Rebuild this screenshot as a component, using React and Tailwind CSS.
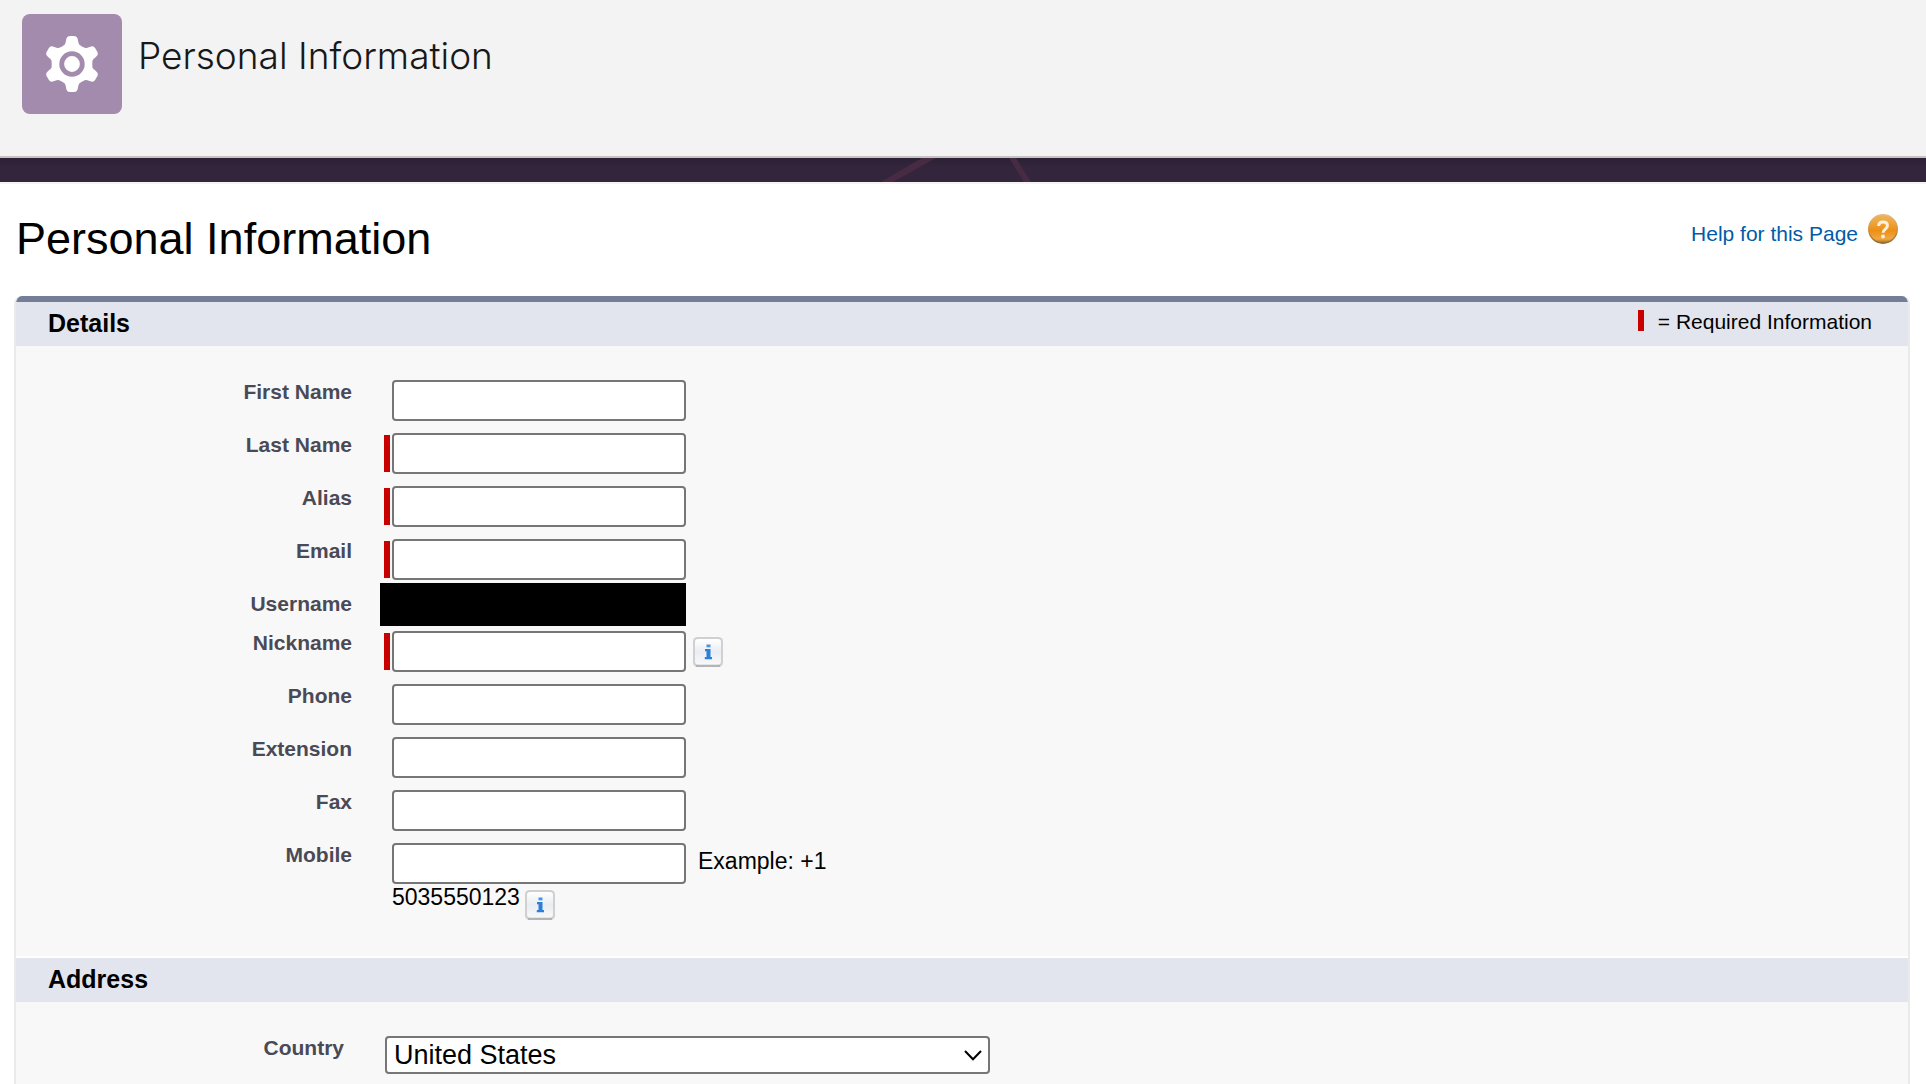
import React from "react";

const toothAngles = [0, 60, 120, 180, 240, 300];

function GearIcon() {
  return (
    <svg viewBox="0 0 100 100" className="size-full" aria-hidden="true">
      <g fill="#fff">
        <circle cx="50" cy="50" r="20.4" />
        {toothAngles.map((a) => (
          <path
            key={a}
            transform={`rotate(${a} 50 50)`}
            d="M41 32 Q43.2 30.8 43.6 28.5 L44.2 25.5 Q44.8 22 48 22 H52 Q55.2 22 55.8 25.5 L56.400 28.5 Q56.8 30.8 59 32 Z"
          />
        ))}
      </g>
      <circle cx="50" cy="50" r="10.3" fill="none" stroke="#a38bae" strokeWidth="4.8" />
    </svg>
  );
}

function HelpIcon() {
  return (
    <svg viewBox="0 0 30 30" className="size-[30px]" aria-hidden="true">
      <defs>
        <linearGradient id="helpFill" x1="0" y1="0" x2="0" y2="1">
          <stop offset="0" stopColor="#e8b462" />
          <stop offset="0.25" stopColor="#efa63e" />
          <stop offset="0.55" stopColor="#ec8f17" />
          <stop offset="0.85" stopColor="#f0a840" />
          <stop offset="1" stopColor="#9c6a24" />
        </linearGradient>
        <linearGradient id="helpRim" x1="0" y1="0" x2="0" y2="1">
          <stop offset="0" stopColor="#e6bd7c" />
          <stop offset="0.6" stopColor="#cf8a2c" />
          <stop offset="1" stopColor="#8f6a38" />
        </linearGradient>
      </defs>
      <circle cx="15" cy="15" r="14.3" fill="url(#helpFill)" stroke="url(#helpRim)" strokeWidth="1.4" />
      <path
        d="M10.600 12c.2-2.600 1.900-3.900 4.400-3.900 2.600 0 4.400 1.400 4.400 3.600 0 3.300-4.300 3.500-4.300 7"
        fill="none"
        stroke="#fdf1da"
        strokeWidth="3"
      />
      <circle cx="15" cy="22.500" r="1.900" fill="#fdf1da" />
    </svg>
  );
}

function InfoButton({ label }) {
  return (
    <button type="button" aria-label={label} className="block size-[30px] shrink-0">
      <svg viewBox="0 0 30 30" className="size-full" aria-hidden="true">
        <defs>
          <linearGradient id="infoFill" x1="0" y1="0" x2="0" y2="1">
            <stop offset="0" stopColor="#fff" />
            <stop offset="0.5" stopColor="#e9edf2" />
            <stop offset="1" stopColor="#f8f8f8" />
          </linearGradient>
        </defs>
        <rect width="30" height="30" rx="4.500" fill="#d0d0d0" />
        <path d="M3 29H27" stroke="#b4b4b4" strokeWidth="2" />
        <rect x="2" y="2" width="26" height="25.500" rx="3" fill="url(#infoFill)" />
        <path d="M12 12h5.500v8h1.500v2.300H11.800v-2.300H13.500v-5.700H12z" fill="#2b7fd6" />
        <rect x="13.500" y="7.500" width="4" height="2.800" fill="#4a94e0" />
      </svg>
    </button>
  );
}

function Row({ id, label, children }) {
  return (
    <div className="flex items-start">
      <label htmlFor={id} className="w-[336px] shrink-0 text-right text-[21px] leading-6 font-bold text-[#4a4a56]">
        {label}
      </label>
      {children}
    </div>
  );
}

function Field({ id, label, required, children }) {
  return (
    <Row id={id} label={label}>
      <div className="mb-3 ml-8 flex items-start">
        <span className={required ? "mt-[2px] mr-[2px] h-[37px] w-[6px] bg-[#c80000]" : "mr-[2px] h-[37px] w-[6px]"} />
        <input
          id={id}
          type="text"
          required={required}
          className="h-[41px] w-[294px] rounded-[4px] border-2 border-[#767676] bg-white px-2 text-[23px] shadow-none outline-none"
        />
        {children}
      </div>
    </Row>
  );
}

function SectionBand({ title, children }) {
  return (
    <div className="flex h-11 items-start justify-between bg-[#e3e5ee] pr-9 pl-8">
      <h2 className="pt-[7px] text-[25px] leading-7 font-bold">{title}</h2>
      {children}
    </div>
  );
}

export default function App() {
  return (
    <div className="flex min-h-screen flex-col bg-white font-['Liberation_Sans',Arial,sans-serif] text-black">
      <header className="flex h-[158px] items-start gap-4 border-b-2 border-[#c4c4c4] bg-[#f3f3f3] pt-[14px] pl-[22px]">
        <div className="size-[100px] rounded-lg bg-[#a38bae]">
          <GearIcon />
        </div>
        <div className="pt-[18px] font-['Inter',sans-serif] text-[37px] leading-[48px] font-light text-[#181818]">
          Personal Information
        </div>
      </header>
      <div className="flex h-[26px] justify-center border-b-2 border-[#f3f3f3] bg-linear-to-b from-[#2d2136] from-0% to-[#33253c] to-40%">
        <svg viewBox="0 0 160 24" className="h-6 w-40" aria-hidden="true">
          <path d="M-2 24L39 0H53L10 24Z" fill="#472b42" />
          <path d="M126 0H133L148 24H141Z" fill="#472b42" />
        </svg>
      </div>

      <main className="flex grow flex-col pr-4 pl-[14px]">
        <div className="flex h-28 items-start justify-between pr-3 pl-[2px]">
          <h1 className="pt-[29px] text-[45px] leading-[52px]">Personal Information</h1>
          <a href="#help" className="flex items-start gap-[10px] pt-[30px] text-[21px] leading-6 text-[#015ba7]">
            <span className="pt-2">Help for this Page</span>
            <HelpIcon />
          </a>
        </div>

        <form className="flex grow flex-col overflow-hidden rounded-t-lg border-x-2 border-[#eaeaea] bg-[#f8f8f8]">
          <div className="-mx-[2px] h-[6px] bg-[#747e96]" />
          <SectionBand title="Details">
            <div className="flex items-start gap-[14px] pt-2 text-[21px] leading-6">
              <span className="h-[21px] w-[6px] bg-[#c80000]" />
              <span>= Required Information</span>
            </div>
          </SectionBand>

          <div className="pt-[34px] pb-9">
            <Field id="firstName" label="First Name" />
            <Field id="lastName" label="Last Name" required />
            <Field id="alias" label="Alias" required />
            <Field id="email" label="Email" required />
            <Row label="Username">
              <div className="-mt-[9px] mb-[5px] ml-7 h-[43px] w-[306px] bg-black" />
            </Row>
            <Field id="nickname" label="Nickname" required>
              <div className="ml-[7px] pt-[6px]">
                <InfoButton label="Nickname help" />
              </div>
            </Field>
            <Field id="phone" label="Phone" />
            <Field id="extension" label="Extension" />
            <Field id="fax" label="Fax" />
            <Row id="mobile" label="Mobile">
              <div className="ml-10 text-[23px] leading-[26px]">
                <div className="flex items-start gap-3">
                  <input
                    id="mobile"
                    type="tel"
                    className="h-[41px] w-[294px] rounded-[4px] border-2 border-[#767676] bg-white px-2 outline-none"
                  />
                  <span className="pt-[5px]">Example: +1</span>
                </div>
                <div className="flex items-start gap-[5px]">
                  <span>5035550123</span>
                  <div className="pt-[6px]">
                    <InfoButton label="Mobile help" />
                  </div>
                </div>
              </div>
            </Row>
          </div>

          <div className="border-t-2 border-white">
            <SectionBand title="Address" />
          </div>
          <div className="flex items-start pt-[34px]">
            <label
              htmlFor="country"
              className="w-[328px] shrink-0 text-right text-[21px] leading-6 font-bold text-[#4a4a56]"
            >
              Country
            </label>
            <div className="relative ml-[41px]">
              <select
                id="country"
                className="block h-[38px] w-[605px] appearance-none rounded-[4px] border-2 border-[#767676] bg-white px-[7px] text-[27px] leading-8 text-black outline-none"
                defaultValue="United States"
              >
                <option>United States</option>
              </select>
              <svg
                viewBox="0 0 18 11"
                className="pointer-events-none absolute top-[14px] right-2 h-[11px] w-[18px]"
                aria-hidden="true"
              >
                <path d="M1 1L9 9.200L17 1" fill="none" stroke="#000" strokeWidth="2" />
              </svg>
            </div>
          </div>
        </form>
      </main>
    </div>
  );
}
